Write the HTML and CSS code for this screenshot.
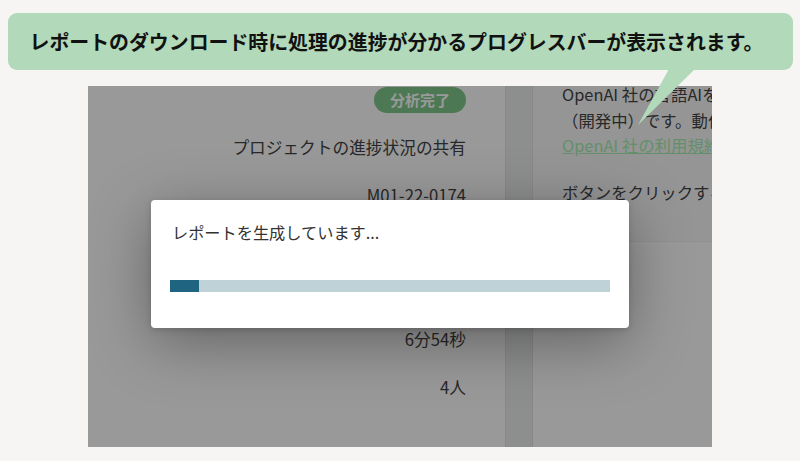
FILE: index.html
```html
<!DOCTYPE html>
<html lang="ja">
<head>
    <meta charset="UTF-8">
    <meta name="viewport" content="width=device-width, initial-scale=1.0">
    <title>レポートのダウンロード</title>
    <link rel="stylesheet" href="styles.css">
</head>
<body>
    <div class="callout">
        <p class="callout-text">レポートのダウンロード時に処理の進捗が分かるプログレスバーが表示されます。</p>
        <svg class="callout-tail" width="70" height="60" viewBox="0 0 70 60">
            <polygon points="32,0 58,0 1,56" fill="#b1d9ba"/>
        </svg>
    </div>

    <div class="shot">
        <div class="screen">
            <div class="detail">
                <span class="badge">分析完了</span>
                <div class="row">プロジェクトの進捗状況の共有</div>
                <div class="row">M01-22-0174</div>
                <!-- モーダルに隠れる行 -->
                <div class="row"></div>
                <div class="row"></div>
                <div class="row">6分54秒</div>
                <div class="row">4人</div>
            </div>
            <div class="strip"></div>
            <div class="side">
                <div class="side-card">
                    <p>OpenAI 社の言語AIを利用した機能<br>（開発中）です。動作については<br><a href="#">OpenAI 社の利用規約</a>をご確認ください。</p>
                    <p>ボタンをクリックすると要約を生成します。</p>
                </div>
            </div>
        </div>

        <!-- モーダル表示中の背景 -->
        <div class="overlay"></div>

        <div class="modal">
            <div class="modal-title">レポートを生成しています...</div>
            <div class="progress">
                <div class="progress-fill" style="width: 6.6%"></div>
            </div>
        </div>
    </div>
</body>
</html>
```

FILE: styles.css
```css
body {
    font-family: 'Noto Sans CJK JP', 'Noto Sans', sans-serif;
    background-color: #f6f5f3;
    color: #444;
    margin: 0;
    padding: 0;
}

/* 吹き出し */
.callout {
    position: relative;
    margin: 13px 7px 0 8px;
    height: 57px;
    background-color: #b1d9ba;
    border-radius: 9px;
    display: flex;
    align-items: center;
    justify-content: center;
    z-index: 3;
}

.callout-text {
    margin: 0;
    font-size: 19.9px;
    font-weight: bold;
    color: #111;
    padding-right: 8px;
}

.callout-tail {
    position: absolute;
    left: 629px;
    top: 56px;
}

/* 画面のキャプチャ */
.shot {
    position: relative;
    width: 624px;
    height: 361px;
    margin: 16px 0 0 88px;
    overflow: hidden;
}

.screen {
    display: grid;
    grid-template-columns: 417px 28px 1fr;
    height: 100%;
    background-color: #fff;
}

.detail {
    display: flex;
    flex-direction: column;
    align-items: flex-end;
    padding: 1px 39px 0 0;
    font-size: 16.7px;
}

.badge {
    background-color: #80c98d;
    color: #fff;
    font-weight: bold;
    font-size: 15px;
    line-height: 26px;
    padding: 0 16px;
    border-radius: 13px;
    margin-bottom: 10px;
}

.row {
    height: 48px;
    line-height: 48px;
    white-space: nowrap;
}

.strip {
    background-color: #eceeed;
    border-left: 1px solid #e2e4e3;
    border-right: 1px solid #e2e4e3;
}

.side {
    background-color: #fff;
    overflow: hidden;
}

.side-card {
    height: 159px;
    padding-left: 29px;
    border-bottom: 1px solid #f0f0f0;
    background-color: #f8f8f8;
    font-size: 16.4px;
    line-height: 25.5px;
    white-space: nowrap;
}

.side-card p {
    margin: -4px 0 21px;
}

.side-card p + p {
    margin-top: 0;
}

.side-card a {
    color: #a6f0b2;
    text-decoration: underline;
}

.overlay {
    position: absolute;
    inset: 0;
    background-color: rgba(0, 0, 0, 0.4);
}

/* 進捗モーダル */
.modal {
    position: absolute;
    left: 63px;
    top: 114px;
    width: 478px;
    box-sizing: border-box;
    padding: 21px 19px 36px;
    background-color: #fff;
    border-radius: 4px;
    box-shadow: 0 14px 60px rgba(0, 0, 0, 0.35), 0 2px 6px rgba(0, 0, 0, 0.15);
}

.modal-title {
    font-size: 16.2px;
    line-height: 22px;
    color: #333;
    padding-left: 2px;
}

.progress {
    margin-top: 37px;
    height: 12px;
    background-color: #bfd2d8;
}

.progress-fill {
    height: 100%;
    background-color: #1f6480;
}
```
